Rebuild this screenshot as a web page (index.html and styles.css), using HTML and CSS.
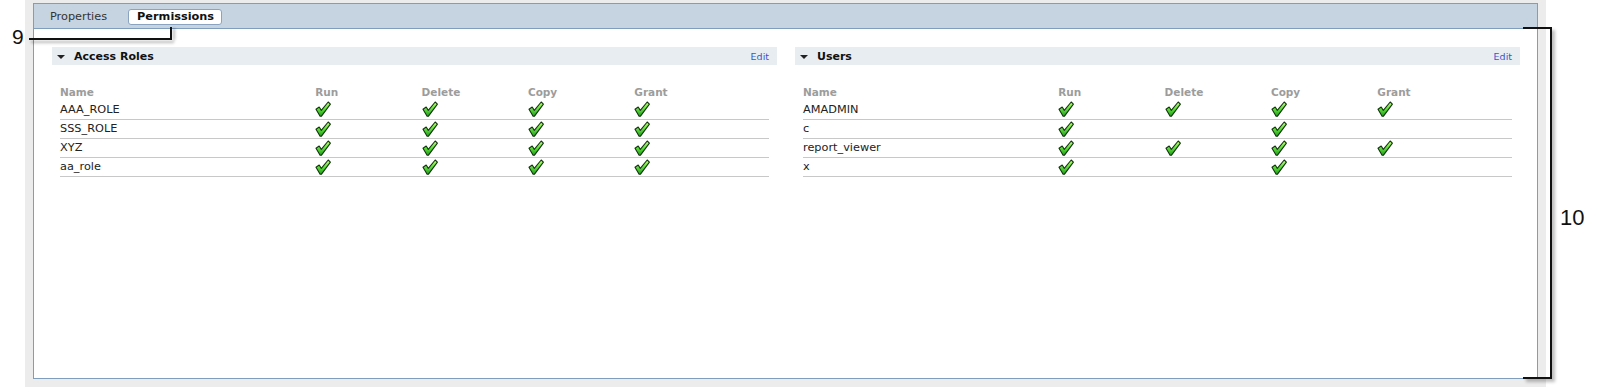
FILE: index.html
```html
<!DOCTYPE html>
<html lang="en">
<head>
    <meta charset="UTF-8">
    <title>Report Permissions</title>
    <link rel="stylesheet" href="styles.css">
</head>
<body>
    <svg width="0" height="0" class="defs">
        <defs>
            <linearGradient id="checkFill" x1="0" y1="0" x2="0" y2="1">
                <stop offset="0" stop-color="#c6ff7a"/>
                <stop offset="0.5" stop-color="#5fe03a"/>
                <stop offset="1" stop-color="#1f9e1a"/>
            </linearGradient>
            <symbol id="check" viewBox="0 0 16 16">
                <path d="M1 8.3 L4.2 6 L6.3 9.4 L13.2 1 L15.4 3.1 L6.5 15.2 L5.1 15.2 Z" fill="url(#checkFill)" stroke="#123410" stroke-width="1.1" stroke-linejoin="round"/>
            </symbol>
        </defs>
    </svg>

    <div class="frame">
        <div class="window">
            <div class="tabs">
                <span class="tab">Properties</span>
                <span class="tab active">Permissions</span>
            </div>

            <div class="content">
                <!-- Access roles -->
                <div class="panel">
                    <div class="panel-head">
                        <span class="arrow"></span>
                        <span class="panel-title">Access Roles</span>
                        <a class="edit" href="#">Edit</a>
                    </div>
                    <table class="perm-table">
                        <thead>
                            <tr>
                                <th class="col-name">Name</th>
                                <th class="col-perm">Run</th>
                                <th class="col-perm">Delete</th>
                                <th class="col-perm">Copy</th>
                                <th>Grant</th>
                            </tr>
                        </thead>
                        <tbody>
                            <tr>
                                <td>AAA_ROLE</td>
                                <td><svg class="ok"><use href="#check"/></svg></td>
                                <td><svg class="ok"><use href="#check"/></svg></td>
                                <td><svg class="ok"><use href="#check"/></svg></td>
                                <td><svg class="ok"><use href="#check"/></svg></td>
                            </tr>
                            <tr>
                                <td>SSS_ROLE</td>
                                <td><svg class="ok"><use href="#check"/></svg></td>
                                <td><svg class="ok"><use href="#check"/></svg></td>
                                <td><svg class="ok"><use href="#check"/></svg></td>
                                <td><svg class="ok"><use href="#check"/></svg></td>
                            </tr>
                            <tr>
                                <td>XYZ</td>
                                <td><svg class="ok"><use href="#check"/></svg></td>
                                <td><svg class="ok"><use href="#check"/></svg></td>
                                <td><svg class="ok"><use href="#check"/></svg></td>
                                <td><svg class="ok"><use href="#check"/></svg></td>
                            </tr>
                            <tr>
                                <td>aa_role</td>
                                <td><svg class="ok"><use href="#check"/></svg></td>
                                <td><svg class="ok"><use href="#check"/></svg></td>
                                <td><svg class="ok"><use href="#check"/></svg></td>
                                <td><svg class="ok"><use href="#check"/></svg></td>
                            </tr>
                        </tbody>
                    </table>
                </div>

                <!-- Users -->
                <div class="panel">
                    <div class="panel-head">
                        <span class="arrow"></span>
                        <span class="panel-title">Users</span>
                        <a class="edit" href="#">Edit</a>
                    </div>
                    <table class="perm-table">
                        <thead>
                            <tr>
                                <th class="col-name">Name</th>
                                <th class="col-perm">Run</th>
                                <th class="col-perm">Delete</th>
                                <th class="col-perm">Copy</th>
                                <th>Grant</th>
                            </tr>
                        </thead>
                        <tbody>
                            <tr>
                                <td>AMADMIN</td>
                                <td><svg class="ok"><use href="#check"/></svg></td>
                                <td><svg class="ok"><use href="#check"/></svg></td>
                                <td><svg class="ok"><use href="#check"/></svg></td>
                                <td><svg class="ok"><use href="#check"/></svg></td>
                            </tr>
                            <tr>
                                <td>c</td>
                                <td><svg class="ok"><use href="#check"/></svg></td>
                                <td></td>
                                <td><svg class="ok"><use href="#check"/></svg></td>
                                <td></td>
                            </tr>
                            <tr>
                                <td>report_viewer</td>
                                <td><svg class="ok"><use href="#check"/></svg></td>
                                <td><svg class="ok"><use href="#check"/></svg></td>
                                <td><svg class="ok"><use href="#check"/></svg></td>
                                <td><svg class="ok"><use href="#check"/></svg></td>
                            </tr>
                            <tr>
                                <td>x</td>
                                <td><svg class="ok"><use href="#check"/></svg></td>
                                <td></td>
                                <td><svg class="ok"><use href="#check"/></svg></td>
                                <td></td>
                            </tr>
                        </tbody>
                    </table>
                </div>
            </div>
        </div>
    </div>

    <!-- callouts drawn over the screenshot -->
    <span class="callout-num num-9">9</span>
    <div class="leader-h"></div>
    <div class="leader-v"></div>

    <div class="bracket"></div>
    <span class="callout-num num-10">10</span>
</body>
</html>
```

FILE: styles.css
```css
:root {
    --frame-bg: #ececec;
    --border-blue: #7f9dbd;
    --tab-bg: #c6d4e2;
    --head-bg: #e8edf2;
    --row-line: #c8c8c8;
    --text: #222222;
    --muted: #9c9c9c;
    --link: #3a55cc;
}

* {
    box-sizing: border-box;
}

body {
    margin: 0;
    position: relative;
    background: #ffffff;
    font-family: "DejaVu Sans", Verdana, sans-serif;
    color: var(--text);
}

.defs {
    position: absolute;
}

.frame {
    margin-left: 25px;
    width: 1521px;
    height: 387px;
    padding: 3px 8px 8px 8px;
    background: var(--frame-bg);
}

.window {
    height: 376px;
    border: 1px solid var(--border-blue);
    background: #ffffff;
}

.tabs {
    height: 25px;
    display: flex;
    align-items: center;
    gap: 21px;
    padding-left: 16px;
    background: var(--tab-bg);
    border-bottom: 1px solid var(--border-blue);
    font-size: 11.3px;
}

.tab {
    color: #333333;
}

.tab.active {
    height: 16px;
    line-height: 14px;
    padding: 0 7px 0 8px;
    margin-top: 1px;
    background: #ffffff;
    border: 1px solid #8aa4c0;
    border-radius: 3px;
    font-weight: bold;
    color: #111111;
}

.content {
    display: flex;
    gap: 18px;
    padding: 18px 17px 0 18px;
}

.panel {
    flex: 1;
}

.panel-head {
    height: 18px;
    display: flex;
    align-items: center;
    padding: 0 8px 0 5px;
    background: var(--head-bg);
}

.arrow {
    width: 0;
    height: 0;
    margin-right: 9px;
    margin-top: 2px;
    border-left: 4px solid transparent;
    border-right: 4px solid transparent;
    border-top: 4px solid #222222;
}

.panel-title {
    font-size: 11px;
    font-weight: bold;
    color: #111111;
}

.edit {
    margin-left: auto;
    font-size: 9.5px;
    color: var(--link);
    text-decoration: none;
}

.perm-table {
    width: calc(100% - 16px);
    margin: 18px 8px 0 8px;
    border-collapse: collapse;
    table-layout: fixed;
}

.perm-table th {
    height: 17px;
    padding: 0;
    text-align: left;
    font-size: 10.5px;
    font-weight: bold;
    color: var(--muted);
}

.perm-table .col-name {
    width: 36%;
}

.perm-table .col-perm {
    width: 15%;
}

.perm-table td {
    height: 19px;
    padding: 0;
    font-size: 11.3px;
    color: var(--text);
    border-bottom: 1px solid var(--row-line);
    vertical-align: middle;
}

.ok {
    display: block;
    width: 16px;
    height: 16px;
}

/* annotation overlay */
.callout-num {
    position: absolute;
    font-family: "Liberation Sans", Arial, sans-serif;
    font-size: 21px;
    line-height: 1;
    color: #111111;
}

.num-9 {
    left: 12px;
    top: 26px;
}

.num-10 {
    left: 1560px;
    top: 207px;
    font-size: 22px;
}

.leader-h {
    position: absolute;
    left: 29px;
    top: 38px;
    width: 143px;
    height: 2px;
    background: #111111;
    box-shadow: 2px 3px 3px rgba(0, 0, 0, 0.3);
}

.leader-v {
    position: absolute;
    left: 170px;
    top: 27px;
    width: 2px;
    height: 12px;
    background: #111111;
    box-shadow: 3px 1px 3px rgba(0, 0, 0, 0.3);
}

.bracket {
    position: absolute;
    left: 1523px;
    top: 27px;
    width: 29px;
    height: 352px;
    border: 2px solid #111111;
    border-left: none;
    box-shadow: 3px 3px 3px rgba(0, 0, 0, 0.25);
}
```
